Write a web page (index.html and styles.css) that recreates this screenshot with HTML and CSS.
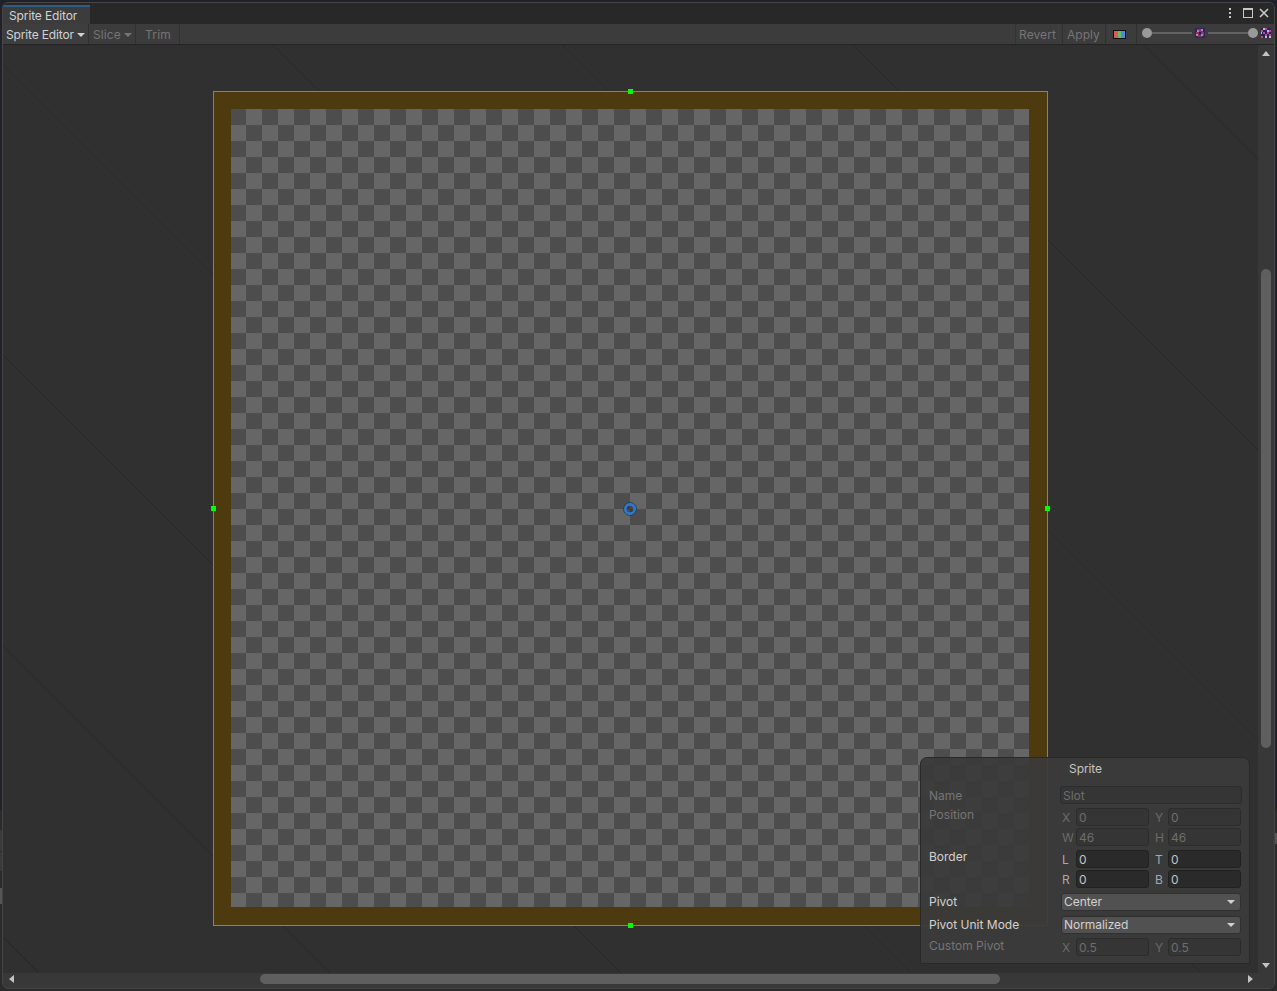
FILE: index.html
```html
<!DOCTYPE html>
<html lang="en">
<head>
  <meta charset="UTF-8">
  <title>Sprite Editor</title>
  <link rel="stylesheet" href="styles.css">
</head>
<body>
  <div class="window">
    <div class="tab-strip">
      <div class="tab">Sprite Editor</div>
      <div class="window-buttons">
        <svg class="btn-more" width="4" height="10" viewBox="0 0 4 10"><rect x="1" y="0" width="2" height="2" fill="#c8c8c8"/><rect x="1" y="4" width="2" height="2" fill="#c8c8c8"/><rect x="1" y="8" width="2" height="2" fill="#c8c8c8"/></svg>
        <svg class="btn-max" width="10" height="10" viewBox="0 0 10 10"><rect x="0.5" y="0.5" width="9" height="9" fill="none" stroke="#c8c8c8"/><rect x="0" y="0" width="10" height="2" fill="#c8c8c8"/></svg>
        <svg width="10" height="10" viewBox="0 0 10 10"><path d="M1 1L9 9M9 1L1 9" stroke="#c8c8c8" stroke-width="1.6"/></svg>
      </div>
    </div>

    <div class="toolbar">
      <div class="tool-btn tool-menu">Sprite Editor<span class="caret"></span></div>
      <div class="tool-btn tool-slice disabled">Slice<span class="caret"></span></div>
      <div class="tool-btn tool-trim disabled">Trim</div>
      <div class="tool-spacer"></div>
      <div class="tool-btn tool-revert disabled">Revert</div>
      <div class="tool-btn tool-apply disabled">Apply</div>
      <div class="tool-btn tool-color">
        <svg width="13" height="9" viewBox="0 0 13 9"><rect width="13" height="9" fill="#111"/><rect x="1" y="1" width="4" height="7" fill="#dc5a5a"/><rect x="5" y="1" width="3" height="7" fill="#62c062"/><rect x="8" y="1" width="4" height="7" fill="#4a8ede"/></svg>
      </div>
      <div class="zoom-group">
        <span class="thumb"></span>
        <span class="track"></span>
        <svg class="mip-small" width="10" height="10" viewBox="0 0 10 10"><rect width="10" height="10" fill="#262a62"/><path d="M2 1h6v3H2zM1 4h3v4H1zM6 4h3v4H6zM3 7h4v2H3z" fill="#8e3468"/><path d="M2 2h2v2H2zM6 1h2v2H6zM1 6h2v2H1zM6 6h2v2H6z" fill="#c97aa4"/><path d="M4 4h2v2H4z" fill="#1b1f48"/></svg>
        <span class="track"></span>
        <span class="thumb"></span>
        <svg class="mip-large" width="10" height="10" viewBox="0 0 10 10"><rect width="10" height="10" fill="#20246a"/><path d="M0 2h2v2H0zM4 0h2v2H4zM8 2h2v2H8zM2 4h2v2H2zM6 4h2v2H6zM0 8h2v2H0zM4 6h2v2H4zM8 6h2v2H8z" fill="#c04a80"/><path d="M2 0h2v2H2zM6 2h2v2H6zM4 8h2v2H4zM0 4h1v2H0zM8 8h2v2H8z" fill="#d8b0cc"/></svg>
      </div>
    </div>

    <div class="main">
      <div class="viewport">
        <svg class="grid-lines" width="1255" height="928" viewBox="0 0 1255 928">
          <line x1="0" y1="-1141" x2="1255" y2="114" />
          <line x1="0" y1="-850" x2="1255" y2="405" />
          <line x1="0" y1="-560" x2="1255" y2="695" class="faint" />
          <line x1="0" y1="-270" x2="1255" y2="985" />
          <line x1="0" y1="20" x2="1255" y2="1275" class="faint" />
          <line x1="0" y1="310" x2="1255" y2="1565" />
          <line x1="0" y1="601" x2="1255" y2="1856" />
          <line x1="0" y1="892" x2="1255" y2="2147" />
        </svg>

        <div class="sprite">
          <div class="checker"></div>
          <span class="handle handle-top"></span>
          <span class="handle handle-bottom"></span>
          <span class="handle handle-left"></span>
          <span class="handle handle-right"></span>
          <svg class="pivot-mark" width="14" height="14" viewBox="0 0 14 14"><circle cx="7" cy="7" r="6.4" fill="none" stroke="#1d3d66" stroke-width="1"/><circle cx="7" cy="7" r="4.6" fill="rgba(40,40,50,0.5)" stroke="#2f78cf" stroke-width="2.6"/></svg>
        </div>

        <div class="sprite-panel">
          <div class="panel-title">Sprite</div>

          <div class="row row-name">
            <div class="row-label disabled">Name</div>
            <div class="field field-wide field-off">Slot</div>
          </div>

          <div class="row row-group">
            <div class="row-label label-top disabled">Position</div>
            <div class="pairs">
              <div class="pair">
                <span class="axis disabled">X</span><div class="field field-off">0</div>
                <span class="axis disabled">Y</span><div class="field field-off">0</div>
              </div>
              <div class="pair">
                <span class="axis disabled">W</span><div class="field field-off">46</div>
                <span class="axis disabled">H</span><div class="field field-off">46</div>
              </div>
            </div>
          </div>

          <div class="row row-group">
            <div class="row-label label-top">Border</div>
            <div class="pairs">
              <div class="pair">
                <span class="axis">L</span><div class="field">0</div>
                <span class="axis">T</span><div class="field">0</div>
              </div>
              <div class="pair">
                <span class="axis">R</span><div class="field">0</div>
                <span class="axis">B</span><div class="field">0</div>
              </div>
            </div>
          </div>

          <div class="row row-select">
            <div class="row-label">Pivot</div>
            <div class="select">Center<span class="caret"></span></div>
          </div>

          <div class="row row-select">
            <div class="row-label">Pivot Unit Mode</div>
            <div class="select">Normalized<span class="caret"></span></div>
          </div>

          <div class="row row-custom">
            <div class="row-label disabled">Custom Pivot</div>
            <div class="pair">
              <span class="axis disabled">X</span><div class="field field-off">0.5</div>
              <span class="axis disabled">Y</span><div class="field field-off">0.5</div>
            </div>
          </div>
        </div>
      </div>

      <div class="vscroll">
        <svg class="arrow-up" width="8" height="5" viewBox="0 0 8 5"><polygon points="4,0 8,5 0,5" fill="#c4c4c4"/></svg>
        <div class="vthumb"></div>
        <svg class="arrow-down" width="8" height="5" viewBox="0 0 8 5"><polygon points="0,0 8,0 4,5" fill="#c4c4c4"/></svg>
      </div>
    </div>

    <div class="hscroll">
      <svg class="arrow-left" width="5" height="8" viewBox="0 0 5 8"><polygon points="5,0 5,8 0,4" fill="#c4c4c4"/></svg>
      <div class="hthumb"></div>
      <svg class="arrow-right" width="5" height="8" viewBox="0 0 5 8"><polygon points="0,0 5,4 0,8" fill="#c4c4c4"/></svg>
    </div>
  </div>
</body>
</html>
```

FILE: styles.css
```css
* {
  margin: 0;
  padding: 0;
  box-sizing: border-box;
}

html, body {
  width: 1277px;
  height: 991px;
  overflow: hidden;
}

/* bits of the docked windows that show around the edge of this one */
body {
  background:
    linear-gradient(#555, #555) 1274px 833px / 3px 11px no-repeat,
    linear-gradient(#3a3a3a, #3a3a3a) 0 830px / 2px 21px no-repeat,
    linear-gradient(#3a3a3a, #3a3a3a) 0 852px / 2px 19px no-repeat,
    linear-gradient(#555, #555) 0 888px / 2px 16px no-repeat,
    linear-gradient(#2b2b2b, #2b2b2b) 0 810px / 100% 181px no-repeat,
    #21212b;
  font-family: Inter, "Noto Sans", sans-serif;
  font-size: 12px;
  color: #d2d2d2;
  padding: 2px 0 0 2px;
}

.disabled {
  color: #757575;
}

.window {
  width: 1273px;
  height: 987px;
  display: flex;
  flex-direction: column;
  background: #383838;
  border: 1px solid #454545;
  border-radius: 6px;
  overflow: hidden;
}

/* tab strip */
.tab-strip {
  height: 21px;
  flex: none;
  display: flex;
  justify-content: space-between;
  padding-top: 2px;
  background: #282828;
}

.tab {
  width: 87px;
  background: #3c3c3c;
  border-top: 2px solid #2c5d87;
  padding-left: 6px;
  line-height: 17px;
  letter-spacing: -0.12px;
}

.window-buttons {
  display: flex;
  align-items: center;
  gap: 6px;
  padding: 0 5px 3px 0;
}

.btn-more {
  margin-right: 5px;
}

/* toolbar */
.toolbar {
  height: 21px;
  flex: none;
  display: flex;
  align-items: stretch;
  background: #3c3c3c;
  border-bottom: 1px solid #232323;
}

.tool-btn {
  display: flex;
  align-items: center;
  border-right: 1px solid #303030;
  padding-top: 1px;
}

.tool-menu {
  width: 86px;
  padding-left: 3px;
  background: #3e3e3e;
  letter-spacing: -0.15px;
}

.tool-slice {
  width: 47px;
  padding-left: 4px;
  letter-spacing: 0.1px;
}

.tool-trim {
  width: 44px;
  padding-left: 9px;
  letter-spacing: 0.2px;
}

.tool-spacer {
  flex: 1;
  border-right: 1px solid #333;
}

.tool-revert {
  width: 47px;
  padding-left: 3px;
  letter-spacing: 0.1px;
}

.tool-apply {
  width: 43px;
  padding-left: 4px;
}

.tool-color {
  width: 31px;
  padding: 0 0 0 7px;
}

.caret {
  display: inline-block;
  width: 0;
  height: 0;
  margin-left: 3px;
  border-left: 4px solid transparent;
  border-right: 4px solid transparent;
  border-top: 4px solid currentColor;
}

.zoom-group {
  width: 137px;
  display: flex;
  align-items: center;
  padding: 0 0 2px 5px;
}

.thumb {
  width: 10px;
  height: 10px;
  flex: none;
  border-radius: 50%;
  background: #999;
}

.track {
  width: 40px;
  height: 2px;
  flex: none;
  background: #616161;
}

.mip-small {
  margin: 0 3px;
  flex: none;
}

.mip-large {
  margin-left: 3px;
  flex: none;
}

/* canvas */
.main {
  flex: 1;
  min-height: 0;
  display: flex;
}

.viewport {
  position: relative;
  width: 1255px;
  overflow: hidden;
  background: #303030;
  padding: 46px 0 0 210px;
}

.grid-lines {
  position: absolute;
  left: 0;
  top: 0;
}

.grid-lines line {
  stroke: #272727;
  stroke-width: 1;
}

.grid-lines line.faint {
  stroke: #2a2a2a;
}

.sprite {
  position: relative;
  width: 835px;
  height: 835px;
  padding: 17px 18px 18px 17px;
  background: #4d3a0e;
  border: 1px solid #4593c4;
}

.checker {
  width: 798px;
  height: 798px;
  background: conic-gradient(#666 25%, #4d4d4d 0 50%, #666 0 75%, #4d4d4d 0) -1px 0 / 32px 32px;
}

.handle {
  position: absolute;
  width: 5px;
  height: 5px;
  background: #00ff00;
}

.handle-top { left: 414px; top: -3px; }
.handle-bottom { left: 414px; bottom: -3px; }
.handle-left { left: -3px; top: 414px; }
.handle-right { right: -3px; top: 414px; }

.pivot-mark {
  position: absolute;
  left: 409px;
  top: 410px;
}

/* floating sprite panel */
.sprite-panel {
  position: absolute;
  left: 917px;
  top: 712px;
  width: 330px;
  height: 207px;
  padding: 0 7px 0 8px;
  background: rgba(58, 58, 58, 0.94);
  border: 1px solid #292929;
  border-radius: 7px 7px 0 0;
}

.panel-title {
  height: 21px;
  line-height: 21px;
  text-align: center;
  color: #c4c4c4;
  letter-spacing: -0.1px;
}

.row {
  display: flex;
}

.row-label {
  width: 131px;
  flex: none;
  line-height: 18px;
}

.label-top {
  margin-top: -2px;
}

.row-name {
  margin-top: 7px;
}

.row-name .row-label {
  height: 18px;
  padding-top: 1px;
}

.row-group {
  margin-top: 4px;
}

.row-select {
  margin-top: 5px;
}

.row-custom {
  margin-top: 4px;
}

.row-custom .row-label {
  margin-top: -1px;
}

.pairs {
  display: flex;
  flex-direction: column;
  gap: 2px;
}

.pair {
  display: flex;
  align-items: center;
  height: 18px;
  padding-left: 1px;
}

.axis {
  width: 15px;
  padding-left: 1px;
  flex: none;
  color: #a8a8a8;
}

.axis.disabled {
  color: #6a6a6a;
}

.axis + .field + .axis {
  width: 19px;
  padding-left: 6px;
}

.field {
  width: 73px;
  height: 18px;
  padding-left: 2px;
  line-height: 17px;
  background: #2a2a2a;
  border: 1px solid #212121;
  border-radius: 3px;
  color: #c4c4c4;
}

.field-off {
  background: #353535;
  border-color: #2c2c2c;
  color: #6e6e6e;
}

.field-wide {
  width: 182px;
}

.select {
  display: flex;
  justify-content: space-between;
  align-items: center;
  width: 180px;
  height: 18px;
  margin-left: 1px;
  padding: 0 5px 1px 2px;
  background: #515151;
  border: 1px solid #303030;
  border-radius: 3px;
  color: #d2d2d2;
  letter-spacing: -0.05px;
}

/* scrollbars */
.vscroll {
  flex: 1;
  display: flex;
  flex-direction: column;
  align-items: center;
  padding-bottom: 5px;
  background: #383838;
}

.arrow-up {
  margin-top: 6px;
  flex: none;
}

.vthumb {
  width: 10px;
  height: 479px;
  margin-top: 213px;
  border-radius: 5px;
  background: #5f5f5f;
}

.arrow-down {
  margin-top: auto;
  flex: none;
}

.hscroll {
  height: 15px;
  flex: none;
  display: flex;
  align-items: center;
  padding: 0 21px 3px 6px;
  background: #383838;
}

.hthumb {
  width: 740px;
  height: 10px;
  margin-left: 246px;
  border-radius: 5px;
  background: #5f5f5f;
}

.arrow-right {
  margin-left: auto;
}
```
